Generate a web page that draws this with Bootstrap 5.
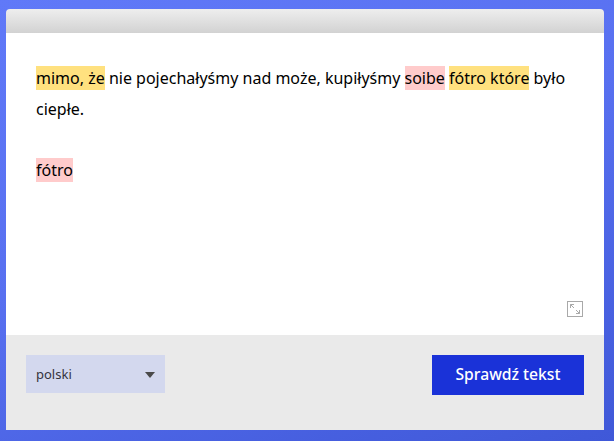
<!DOCTYPE html>
<html lang="pl">
<head>
<meta charset="utf-8">
<title>Sprawdź tekst</title>
<link rel="stylesheet" href="https://cdn.jsdelivr.net/npm/bootstrap@5.3.0/dist/css/bootstrap.min.css">
<style>
html,body{height:100%;}
body{background:linear-gradient(160deg,#6079f8 0%,#5870f0 45%,#3f58d8 100%);font-family:"Noto Sans","Open Sans",sans-serif;overflow:hidden;}
.stage{padding:9px 10px 11px 6px;height:441px;}
.editor{height:421px;border-radius:4px 4px 0 0;overflow:hidden;}
.topstrip{height:24px;background:linear-gradient(180deg,#eeeeee 0%,#d2d2d2 100%);}
.textarea-box{height:302px;padding:30px 30px 0;background:#fff;color:#000;font-size:16px;line-height:30.6px;}
.textarea-box p{margin:0 0 31px;}
.hl{display:inline-block;height:24px;line-height:24px;}
.hl-y{background:#ffe17f;}
.hl-r{background:#ffcbcb;}
.expand{position:absolute;right:21px;bottom:18px;display:block;}
.bar{height:95px;background:#eaeaea;padding:20px 20px 0;}
.lang{width:139px;height:38px;background:#d3d8ee;padding:1px 10px 0;font-size:13px;color:#33333d;}
.caret-down{width:0;height:0;border-left:5.5px solid transparent;border-right:5.5px solid transparent;border-top:6px solid #4a4a4a;}
.go{width:152px;height:40px;border-radius:0;border:0;padding:0;background:#1a32d8;color:#fff;font-size:15.7px;font-weight:500;}
.go:hover{background:#1a32d8;color:#fff;}
</style>
</head>
<body>
<div class="stage">
  <div class="editor d-flex flex-column">
    <div class="topstrip"></div>
    <div class="textarea-box position-relative">
      <p><span class="hl hl-y">mimo, że</span> nie pojechałyśmy nad może, kupiłyśmy <span class="hl hl-r">soibe</span> <span class="hl hl-y">fótro które</span> było ciepłe.</p>
      <p><span class="hl hl-r">fótro</span></p>
      <svg class="expand" width="16" height="16" viewBox="0 0 16 16" fill="none" stroke="#a9a9a9">
        <rect x="0.5" y="0.5" width="15" height="15" stroke-width="1"/>
        <path d="M3.5 7V3.5H7M3.5 3.5L7 7M12.5 9V12.5H9M12.5 12.5L9 9" stroke-width="1"/>
      </svg>
    </div>
    <div class="bar d-flex justify-content-between align-items-start">
      <div class="lang d-flex align-items-center justify-content-between">
        <span>polski</span><span class="caret-down"></span>
      </div>
      <button type="button" class="btn go">Sprawdź tekst</button>
    </div>
  </div>
</div>
<script src="https://cdn.jsdelivr.net/npm/bootstrap@5.3.0/dist/js/bootstrap.bundle.min.js"></script>
</body>
</html>
